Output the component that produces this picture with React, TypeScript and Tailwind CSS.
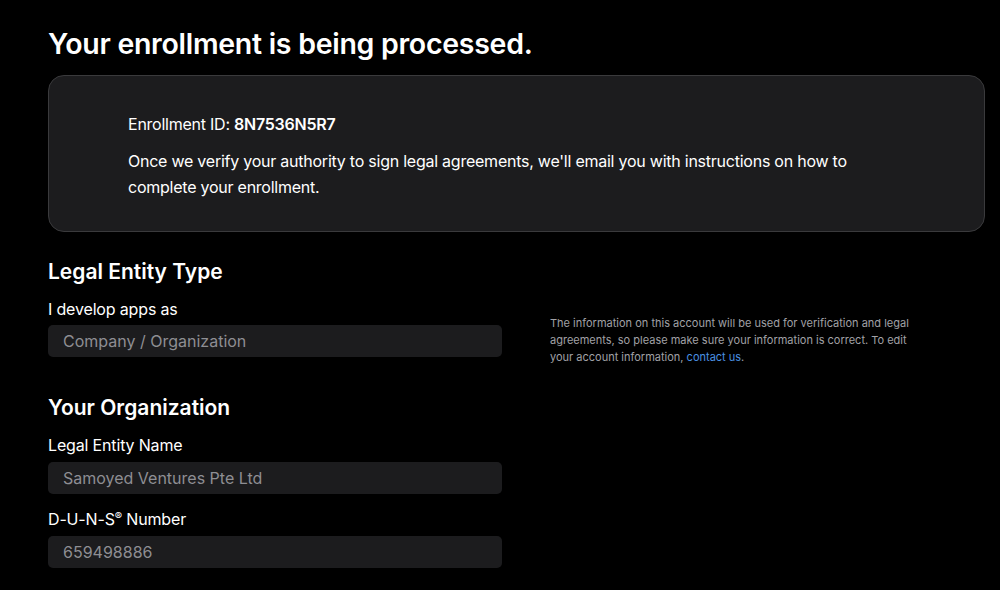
export default function App() {
  return (
    <div className="min-h-[590px] w-full bg-black font-['Inter',sans-serif] text-white">
      <div className="px-12 pt-[26px]">
        <h1 className="text-[28.5px] font-semibold leading-[36px] tracking-[-0.01em]">
          Your enrollment is being processed.
        </h1>

        <section className="mt-[13px] h-[157px] w-[937px] rounded-[16px] border border-[#3a3a3c] bg-[#1c1c1e] pl-[79px] pt-[36px]">
          <p className="text-[16px] leading-[24px] tracking-[-0.015em]">
            Enrollment ID: <span className="font-semibold">8N7536N5R7</span>
          </p>
          <p className="mt-[12px] max-w-[740px] text-[16px] leading-[26px] tracking-[-0.015em]">
            Once we verify your authority to sign legal agreements, we'll email you with instructions on how to
            complete your enrollment.
          </p>
        </section>

        <div className="mt-[25px] flex gap-12">
          <div className="flex w-[454px] flex-col">
            <h2 className="text-[21px] font-semibold leading-[30px]">Legal Entity Type</h2>
            <label className="mt-[11px] text-[16px] leading-[22px] tracking-[-0.01em]">I develop apps as</label>
            <div className="mt-[5px] flex h-[32px] items-center rounded-[5px] bg-[#1c1c1e] px-[15px] text-[16px] text-[#8e8e93]">
              Company / Organization
            </div>

            <h2 className="mt-[36px] text-[21px] font-semibold leading-[30px]">Your Organization</h2>
            <label className="mt-[11px] text-[16px] leading-[22px] tracking-[-0.01em]">Legal Entity Name</label>
            <div className="mt-[6px] flex h-[32px] items-center rounded-[5px] bg-[#1c1c1e] px-[15px] text-[16px] text-[#8e8e93]">
              Samoyed Ventures Pte Ltd
            </div>
            <label className="mt-[14px] text-[16px] leading-[22px] tracking-[-0.01em]">
              D-U-N-S<sup className="text-[11px]">®</sup> Number
            </label>
            <div className="mt-[6px] flex h-[32px] items-center rounded-[5px] bg-[#1c1c1e] px-[15px] text-[16px] text-[#8e8e93]">
              659498886
            </div>
          </div>

          <div className="w-[372px] pt-[58px]">
            <p className="text-[11px] leading-[17px] text-[#a1a1a6]">
              The information on this account will be used for verification and legal agreements, so please make sure
              your information is correct. To edit your account information,{" "}
              <a className="text-[#4a90e2]">contact us</a>.
            </p>
          </div>
        </div>
      </div>
    </div>
  );
}
